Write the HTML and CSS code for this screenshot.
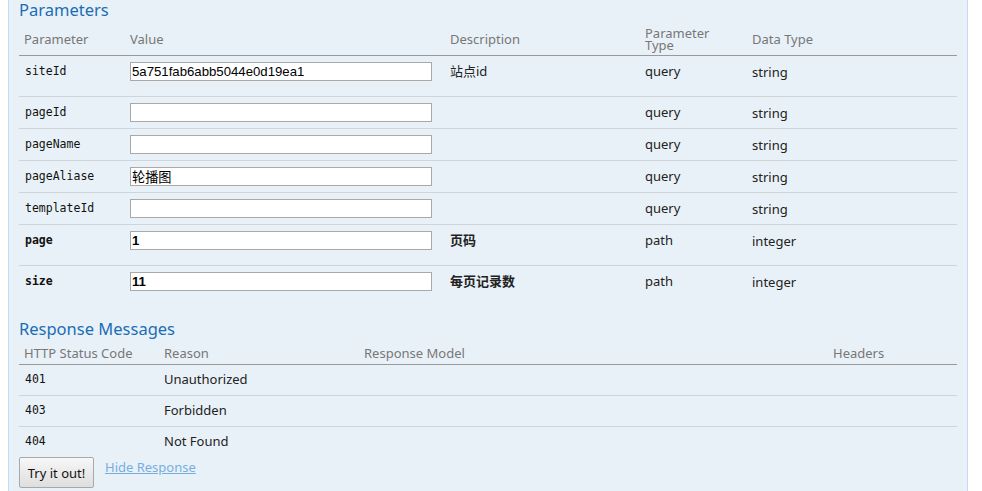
FILE: index.html
```html
<!DOCTYPE html>
<html>
<head>
<meta charset="utf-8">
<link rel="stylesheet" href="styles.css">
</head>
<body>
<div class="panel">
  <h4 class="heading">Parameters</h4>
  <table class="params">
    <colgroup>
      <col class="c-name"><col class="c-value"><col class="c-desc"><col class="c-ptype"><col class="c-dtype">
    </colgroup>
    <thead>
      <tr>
        <th>Parameter</th>
        <th>Value</th>
        <th>Description</th>
        <th class="wrap">Parameter<br>Type</th>
        <th>Data Type</th>
      </tr>
    </thead>
    <tbody>
      <tr class="tall">
        <td class="code">siteId</td>
        <td><input class="field" type="text" value="5a751fab6abb5044e0d19ea1"></td>
        <td class="desc">站点id</td>
        <td>query</td>
        <td class="dtype">string</td>
      </tr>
      <tr>
        <td class="code">pageId</td>
        <td><input class="field" type="text" value=""></td>
        <td class="desc"></td>
        <td>query</td>
        <td class="dtype">string</td>
      </tr>
      <tr>
        <td class="code">pageName</td>
        <td><input class="field" type="text" value=""></td>
        <td class="desc"></td>
        <td>query</td>
        <td class="dtype">string</td>
      </tr>
      <tr>
        <td class="code">pageAliase</td>
        <td><input class="field" type="text" value="轮播图"></td>
        <td class="desc"></td>
        <td>query</td>
        <td class="dtype">string</td>
      </tr>
      <tr>
        <td class="code">templateId</td>
        <td><input class="field" type="text" value=""></td>
        <td class="desc"></td>
        <td>query</td>
        <td class="dtype">string</td>
      </tr>
      <tr class="tall required">
        <td class="code">page</td>
        <td><input class="field" type="text" value="1"></td>
        <td class="desc">页码</td>
        <td>path</td>
        <td class="dtype">integer</td>
      </tr>
      <tr class="tall required last">
        <td class="code">size</td>
        <td><input class="field" type="text" value="11"></td>
        <td class="desc">每页记录数</td>
        <td>path</td>
        <td class="dtype">integer</td>
      </tr>
    </tbody>
  </table>

  <h4 class="heading resp-heading">Response Messages</h4>
  <table class="responses">
    <colgroup>
      <col class="r-code"><col class="r-reason"><col class="r-model"><col class="r-headers">
    </colgroup>
    <thead>
      <tr>
        <th>HTTP Status Code</th>
        <th>Reason</th>
        <th>Response Model</th>
        <th>Headers</th>
      </tr>
    </thead>
    <tbody>
      <tr><td class="code">401</td><td>Unauthorized</td><td></td><td></td></tr>
      <tr><td class="code">403</td><td>Forbidden</td><td></td><td></td></tr>
      <tr class="last"><td class="code">404</td><td>Not Found</td><td></td><td></td></tr>
    </tbody>
  </table>

  <div class="actions">
    <button class="try" type="button">Try it out!</button>
    <a class="hide" href="#">Hide Response</a>
  </div>
</div>
</body>
</html>
```

FILE: styles.css
```css
html, body {
  margin: 0;
  padding: 0;
  background: #ffffff;
}

body {
  font-family: "Noto Sans", "Noto Sans CJK SC", sans-serif;
  font-size: 13px;
  color: #222;
}

.panel {
  margin-left: 8px;
  width: 960px;
  box-sizing: border-box;
  height: 491px;
  background: #e9f1f8;
  border-left: 1px solid #c6dbee;
  border-right: 1px solid #c6dbee;
  padding: 0 10px;
}

.heading {
  margin: 0;
  padding-top: 1px;
  font-size: 16.5px;
  font-weight: normal;
  line-height: 18px;
  color: #1a6db5;
}

table {
  width: 100%;
  border-collapse: collapse;
  table-layout: fixed;
}

.params {
  margin-top: 3px;
}

.c-name { width: 106px; }
.c-value { width: 320px; }
.c-desc { width: 195px; }
.c-ptype { width: 107px; }
.c-dtype { width: auto; }

th {
  text-align: left;
  font-weight: normal;
  color: #777;
  font-size: 13px;
  line-height: 12px;
  vertical-align: middle;
  padding: 0 5px;
  border-bottom: 1px solid #9a9a9a;
}

.params th {
  height: 33px;
}

td {
  vertical-align: top;
  padding: 6px 5px 6px 5px;
  line-height: 19px;
  border-bottom: 1px solid #cfd4d8;
  color: #222;
}

tr.last td {
  border-bottom: none;
}

tr.tall td {
  padding-bottom: 15px;
}

.code {
  font-family: "DejaVu Sans Mono", monospace;
  font-size: 11.5px;
  color: #111;
  padding-left: 6px;
}

.params td.dtype {
  padding-top: 7px;
  padding-bottom: 5px;
}

.params tr.tall td.dtype {
  padding-bottom: 14px;
}

.field {
  display: block;
  box-sizing: border-box;
  width: 302px;
  height: 19px;
  margin: 0;
  padding: 0 1px;
  border: 1px solid #a9a9a9;
  background: #fff;
  font-family: "Liberation Sans", "Noto Sans CJK SC", sans-serif;
  font-size: 13.2px;
  color: #000;
  outline: none;
}

tr.required .code,
tr.required .desc,
tr.required .field {
  font-weight: bold;
}

.resp-heading {
  margin-top: 13px;
}

.r-code { width: 140px; }
.r-reason { width: 200px; }
.r-model { width: 469px; }
.r-headers { width: auto; }

.responses th {
  height: 22px;
  line-height: 17px;
  padding-top: 4px;
}

.responses td {
  padding: 5px 5px 6px 5px;
}

.responses td.code {
  padding-left: 6px;
}

.actions {
  display: flex;
  align-items: flex-start;
  gap: 11px;
  margin-top: 0;
}

.try {
  width: 75px;
  height: 31px;
  margin: 0;
  padding: 0;
  border: 1px solid #a8a8a8;
  border-radius: 2px;
  background: linear-gradient(#f7f7f7, #dedede);
  font-family: "Noto Sans", sans-serif;
  font-size: 13px;
  color: #111;
}

.hide {
  margin-top: 2px;
  font-size: 13px;
  line-height: 17px;
  color: #78aede;
  text-decoration: underline;
}
```
